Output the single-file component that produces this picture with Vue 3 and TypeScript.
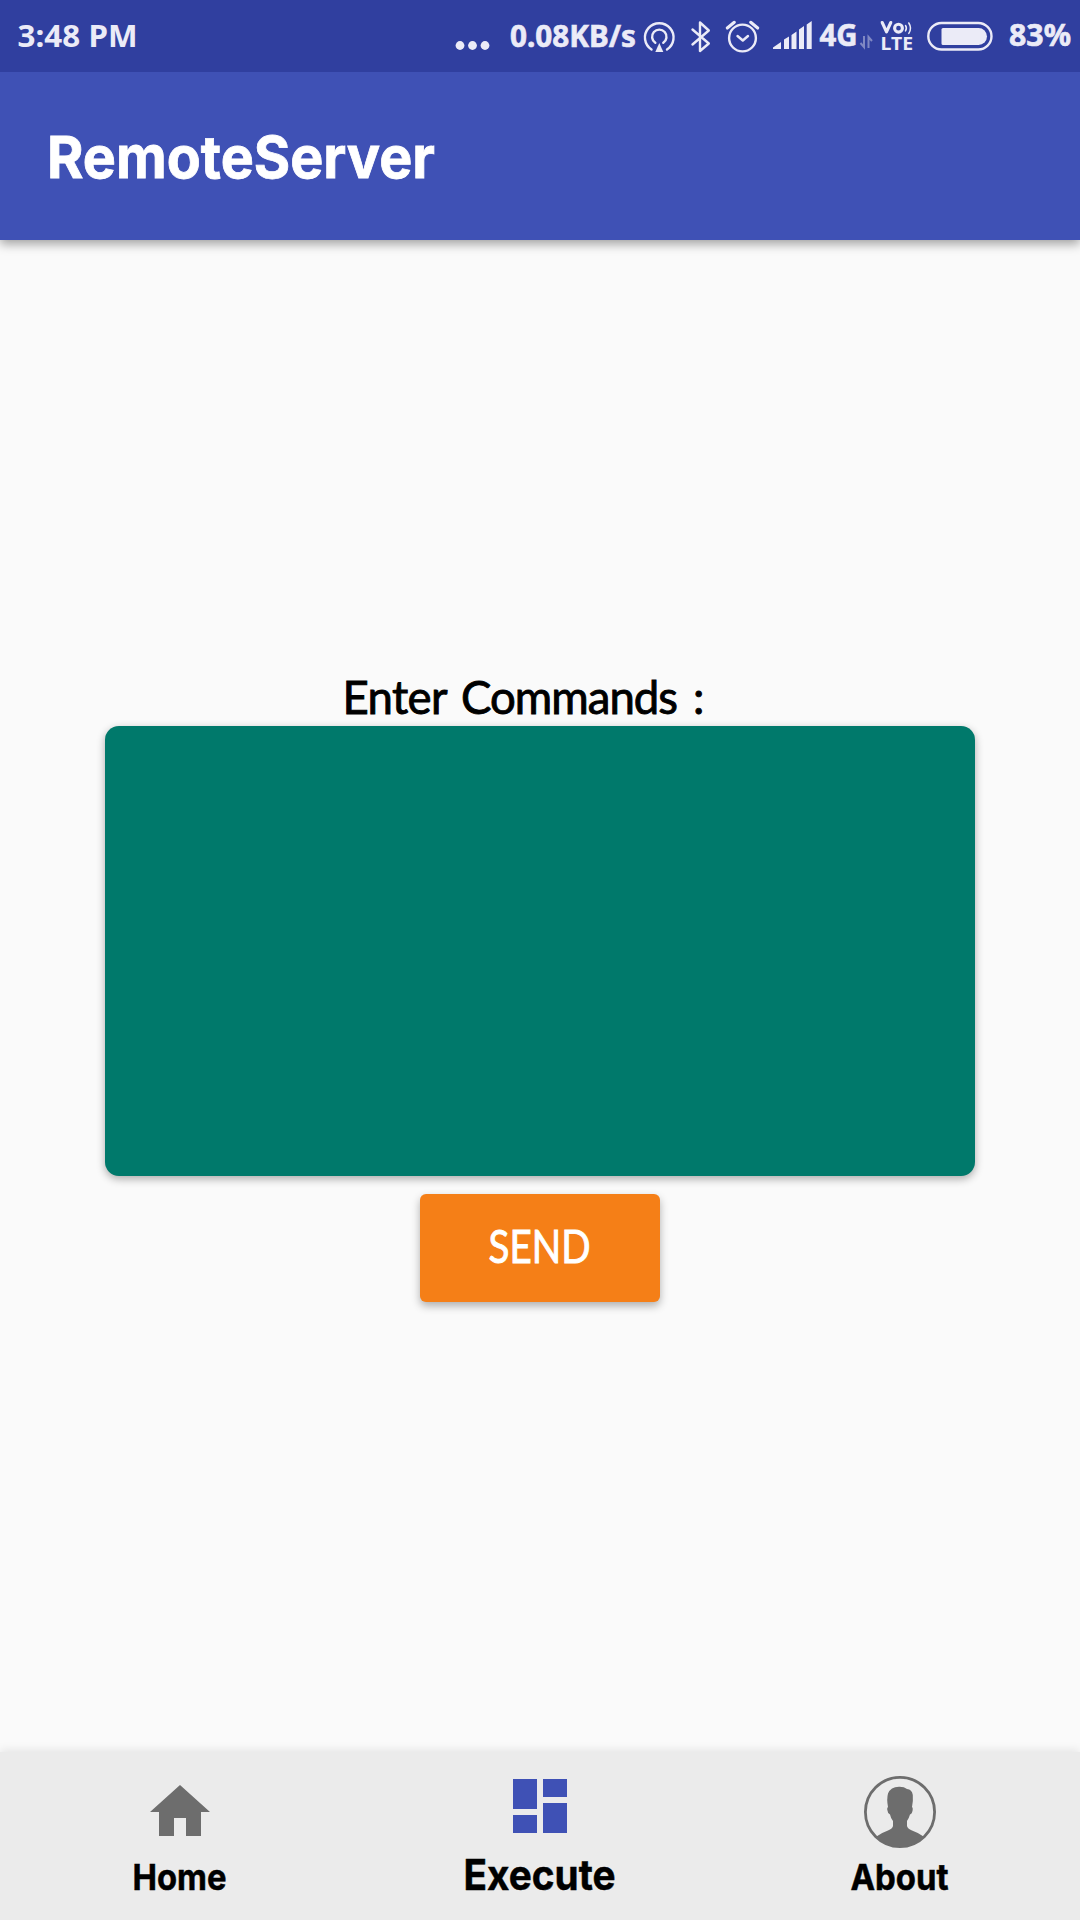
<script setup lang="ts">
import { ref } from 'vue'

interface Tab {
  id: string
  label: string
  width: number
  size: number
}

const tabs: Tab[] = [
  { id: 'home', label: 'Home', width: 94, size: 36 },
  { id: 'execute', label: 'Execute', width: 152, size: 42 },
  { id: 'about', label: 'About', width: 98, size: 36 },
]
const active = ref('execute')
</script>

<template>
  <div class="screen">
    <header class="status">
      <svg class="clock" width="140" height="72">
        <text x="17.500" y="47" font-size="31" textLength="120" lengthAdjust="spacingAndGlyphs">3:48 PM</text>
      </svg>
      <div class="indicators">
        <svg width="50" height="72" viewBox="450 0 50 72">
          <circle cx="460" cy="45.500" r="4.400" /><circle cx="472.500" cy="45.500" r="4.400" /><circle cx="485" cy="45.500" r="4.400" />
        </svg>
        <svg width="140" height="72" viewBox="500 0 140 72">
          <text class="heavy" x="510" y="46.700" font-size="29.500" textLength="126" lengthAdjust="spacingAndGlyphs">0.08KB/s</text>
        </svg>
        <svg width="40" height="72" viewBox="640 0 40 72">
          <path class="line" d="M651.500 49.500a14.300 14.300 0 1 1 15.500 0M655.300 42.800a7.200 7.200 0 1 1 8 0" />
          <path d="M659.300 43l4 9h-8z" />
        </svg>
        <svg width="40" height="72" viewBox="680 0 40 72">
          <path class="line" d="M692.500 29.500L708.800 43.500L700 51V22.500L708.800 30.500L692.500 44.500" />
        </svg>
        <svg width="50" height="72" viewBox="720 0 50 72">
          <circle class="line" cx="742.500" cy="38" r="13.400" />
          <path class="line" d="M737.500 36l5.300 4.500 5.200-4.500" />
          <path class="line thick" d="M727.300 28l7-5.700M757.700 28l-7-5.700" />
        </svg>
        <svg width="46" height="72" viewBox="770 0 46 72">
          <path d="M773 49v-1.500l8-5.500v7zM784 49V39.500l5-3V49zM791.500 49V35l5-3.500V49zM799 49V29.500l5-3.500V49zM806.700 49V24.500l5-3.500v28z" />
        </svg>
        <svg width="60" height="72" viewBox="816 0 60 72">
          <text class="heavy" x="819.500" y="46" font-size="29.500" textLength="38" lengthAdjust="spacingAndGlyphs">4G</text>
          <path class="dim" d="M864 36v11l-3.500-4M868.500 48V37l3.500 4" />
        </svg>
        <svg width="44" height="72" viewBox="876 0 44 72">
          <path class="line thick" d="M882.200 22.500l4.300 9.300 4.300-9.300" />
          <circle class="line thick" cx="898.500" cy="28.200" r="3.900" />
          <path class="line slim" d="M905.500 25.500q1.800 2.700 0 5.400M908.800 23q3.400 5.200 0 10.400" />
          <text x="880.500" y="49.500" font-size="17.500" textLength="32.500" lengthAdjust="spacingAndGlyphs">LTE</text>
        </svg>
        <svg width="80" height="72" viewBox="920 0 80 72">
          <rect class="line" x="928.300" y="23" width="63.200" height="26.500" rx="13.250" />
          <path d="M943 28h35.500a8.500 8.500 0 0 1 0 17H943a1.500 1.500 0 0 1-1.500-1.500v-14A1.500 1.500 0 0 1 943 28z" />
        </svg>
        <svg width="80" height="72" viewBox="1000 0 80 72">
          <text class="heavy" x="1009" y="46" font-size="29.500" textLength="62" lengthAdjust="spacingAndGlyphs">83%</text>
        </svg>
      </div>
    </header>

    <div class="toolbar">
      <svg width="400" height="168">
        <text x="-3" y="105.500" font-size="58" textLength="388" lengthAdjust="spacingAndGlyphs">RemoteServer</text>
      </svg>
    </div>

    <main class="content">
      <svg class="prompt" width="380" height="60">
        <text y="48" font-size="45.500"><tspan x="8.500" textLength="104" lengthAdjust="spacing">Enter</tspan> <tspan x="127" textLength="217" lengthAdjust="spacing">Commands</tspan> <tspan x="359">:</tspan></text>
      </svg>
      <div class="editor" contenteditable="true"></div>
      <button class="send" type="button">
        <svg width="120" height="72">
          <text x="8.500" y="51" font-size="45.500" textLength="102" lengthAdjust="spacingAndGlyphs">SEND</text>
        </svg>
      </button>
    </main>

    <nav class="tabs">
      <button
        v-for="tab in tabs"
        :key="tab.id"
        type="button"
        class="tab"
        :class="{ active: active === tab.id }"
        @click="active = tab.id"
      >
        <svg v-if="tab.id === 'home'" class="icon" width="72" height="72" viewBox="0 0 24 24">
          <path d="M10 20v-6h4v6h5v-8h3L12 3 2 12h3v8z" />
        </svg>
        <svg v-else-if="tab.id === 'execute'" class="icon" width="72" height="72" viewBox="0 0 24 24">
          <path d="M3 13h8V3H3v10zm0 8h8v-6H3v6zm10 0h8V11h-8v10zm0-18v6h8V3h-8z" />
        </svg>
        <svg v-else class="icon" width="72" height="72" viewBox="0 0 72 72">
          <circle cx="36" cy="36" r="34.600" fill="none" stroke="#6d6d6d" stroke-width="2.800" />
          <path d="M12.500 60.500Q17 57 24 54.500Q28.500 52.500 29 50V45Q26.500 41.500 26 38.500Q23.500 37 23.200 33.500Q23 31.500 24 31Q22.500 23 24 17.500Q26.500 11 35 10.700Q40 10.500 43 13Q48 13.500 48.800 19Q49.300 25 48 31Q49 31.500 48.700 34Q48 38 46 38.500Q45 42 43 45V50Q43.500 52.500 48 54.500Q55 57 59.500 60.500Q49 71 36 71T12.500 60.500Z" />
        </svg>
        <svg class="label" width="190" height="60">
          <text x="94.500" y="42" text-anchor="middle" :font-size="tab.size" :textLength="tab.width" lengthAdjust="spacingAndGlyphs">{{ tab.label }}</text>
        </svg>
      </button>
    </nav>
  </div>
</template>

<style>
body {
  margin: 0;
}
</style>

<style scoped>
.screen {
  width: 1080px;
  height: 1920px;
  display: flex;
  flex-direction: column;
  background: #fafafa;
  overflow: hidden;
}
svg {
  display: block;
  flex: none;
  overflow: visible;
}
button {
  border: 0;
  padding: 0;
}
.status {
  position: relative;
  z-index: 1;
  display: flex;
  justify-content: space-between;
  height: 72px;
  flex: none;
  background: #303f9f;
  fill: #ebebf7;
  font-family: "Noto Sans", sans-serif;
  font-weight: 700;
}
.heavy {
  stroke: #ebebf7;
  stroke-width: 0.6;
}
.indicators {
  display: flex;
}
.line {
  fill: none;
  stroke: #ebebf7;
  stroke-width: 2.4;
  stroke-linecap: round;
  stroke-linejoin: round;
}
.thick {
  stroke-width: 3.1;
}
.slim {
  stroke-width: 1.5;
}
.dim {
  fill: none;
  stroke: #8088c3;
  stroke-width: 2;
}
.toolbar {
  height: 168px;
  flex: none;
  padding-left: 50px;
  background: #3f51b5;
  box-shadow: 0 4px 10px rgba(0, 0, 0, 0.36);
  fill: #fff;
  stroke: #fff;
  stroke-width: 0.8;
  font-family: Inter, sans-serif;
  font-weight: 700;
}
.content {
  flex: 1;
  display: flex;
  flex-direction: column;
  align-items: center;
  padding-top: 426px;
  font-family: Lato, sans-serif;
}
.prompt {
  margin-right: 32px;
  fill: #000;
  stroke: #000;
  stroke-width: 0.9;
}
.editor {
  box-sizing: border-box;
  width: 870px;
  height: 450px;
  border-radius: 14px;
  background: #00796b;
  box-shadow: 0 3px 8px rgba(0, 0, 0, 0.32);
}
.send {
  display: flex;
  align-items: center;
  justify-content: center;
  width: 240px;
  height: 108px;
  margin-top: 18px;
  border-radius: 6px;
  background: #f57f17;
  box-shadow: 0 4px 8px rgba(0, 0, 0, 0.3);
  font-family: inherit;
  fill: #fff;
  stroke: #fff;
  stroke-width: 0.9;
}
.tabs {
  display: flex;
  height: 168px;
  flex: none;
  background: #ebebeb;
  box-shadow: 0 -2px 9px rgba(0, 0, 0, 0.09);
}
.tab {
  flex: 1;
  display: flex;
  flex-direction: column;
  align-items: center;
  padding-top: 24px;
  background: none;
  font-family: Inter, sans-serif;
  font-weight: 700;
}
.icon {
  fill: #6d6d6d;
}
.label {
  fill: #000;
  stroke: #000;
  stroke-width: 0.5;
}
.active {
  padding-top: 18px;
}
.active .icon {
  fill: #3f51b5;
}
.active .label {
  margin-top: 6px;
}
</style>
